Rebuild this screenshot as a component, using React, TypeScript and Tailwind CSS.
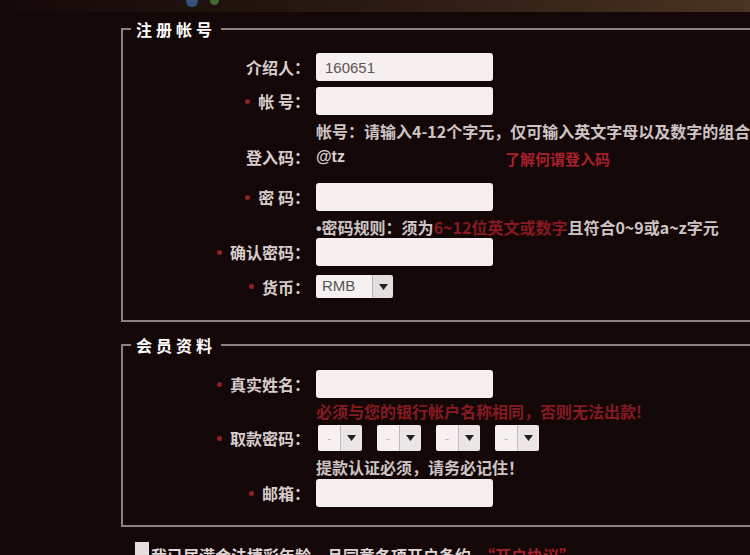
import type { ReactNode } from 'react';

const FONT = "font-['Noto_Sans_CJK_SC','Noto_Sans',sans-serif]";
const LATIN = "font-['Liberation_Sans','Noto_Sans_CJK_SC',sans-serif]";

function Req() {
  return <span className="mr-[8px] inline-block h-[5px] w-[5px] rounded-full bg-[#8e2228]" />;
}

interface RowProps {
  label?: string;
  req?: boolean;
  className: string;
  children: ReactNode;
}

function Row({ label, req, className, children }: RowProps) {
  return (
    <div className={`flex items-center ${className}`}>
      <div className="flex w-[187px] shrink-0 items-center justify-end text-[16px] font-bold text-[#d6cecc]">
        {label && req && <Req />}
        {label}
      </div>
      <div className="ml-[6px] flex items-center">{children}</div>
    </div>
  );
}

function TextInput({ value = '' }: { value?: string }) {
  return (
    <input
      readOnly
      value={value}
      className={`h-[28px] w-[177px] shrink-0 rounded-[3px] bg-[#f5efef] px-[9px] text-[15px] text-[#5a5555] outline-none ${LATIN}`}
    />
  );
}

function Arrow() {
  return (
    <svg width="9" height="6" viewBox="0 0 9 6">
      <path d="M0 0h9L4.5 6z" fill="#222" />
    </svg>
  );
}

function Currency() {
  return (
    <div className="flex h-[23px] overflow-hidden rounded-[2px]">
      <div className={`flex w-[56px] items-center bg-[#f6f0f0] pl-[6px] text-[15px] text-[#555] ${LATIN}`}>RMB</div>
      <div className="flex w-[21px] items-center justify-center border-l border-[#b9b1b1] bg-[#e4dddd]">
        <Arrow />
      </div>
    </div>
  );
}

function DigitSelect() {
  return (
    <div className="flex h-[26px] w-[44px] overflow-hidden rounded-[2px]">
      <div className="flex w-[22px] items-center justify-center bg-[#f6f0f0] text-[12px] text-[#b8b0b0]">-</div>
      <div className="flex w-[22px] items-center justify-center border-l border-[#c4bcbc] bg-[#ebe5e5]">
        <Arrow />
      </div>
    </div>
  );
}

function Legend({ children }: { children: ReactNode }) {
  return (
    <legend className="ml-[8px] px-[5px] text-[16px] font-bold leading-[20px] tracking-[4px] text-white">
      {children}
    </legend>
  );
}

const HINT = 'whitespace-nowrap text-[16px] font-bold text-[#cdc5c3]';

export default function App() {
  return (
    <div className={`h-[555px] w-[750px] overflow-hidden bg-[#140708] ${FONT}`}>
      {/* top strip */}
      <div className="flex h-[12px] items-start gap-[12px] bg-linear-to-r from-[#150808] via-[#2a1a12] to-[#4a3323] pl-[186px]">
        <span className="-mt-[5px] h-[12px] w-[12px] rounded-full bg-[#3f7fc4] opacity-60" />
        <span className="-mt-[4px] h-[9px] w-[9px] rounded-full bg-[#5aa64a] opacity-60" />
      </div>

      <fieldset className="ml-[121px] mt-[7px] w-[660px] border-2 border-[#8d7f7c] pb-[17px] pt-[11px]">
        <Legend>注册帐号</Legend>

        <Row label="介绍人：" className="h-[34px]">
          <TextInput value="160651" />
        </Row>
        <Row label="帐 号：" req className="h-[34px]">
          <TextInput />
        </Row>
        <Row className="h-[26px]">
          <span className={HINT}>帐号：请输入4-12个字元，仅可输入英文字母以及数字的组合</span>
        </Row>
        <Row label="登入码：" className="h-[26px]">
          <span className={`w-[189px] text-[16px] font-bold text-[#d9d1cf] ${LATIN}`}>@tz</span>
          <span className="mt-[5px] text-[15px] font-bold text-[#a8202a]">了解何谓登入码</span>
        </Row>
        <Row label="密 码：" req className="mt-[8px] h-[38px]">
          <TextInput />
        </Row>
        <Row className="h-[24px]">
          <span className={HINT}>
            <span className={LATIN}>•</span>密码规则：须为<span className="text-[#861a20]">6~12位英文或数字</span>且符合0~9或a~z字元
          </span>
        </Row>
        <Row label="确认密码：" req className="h-[24px]">
          <TextInput />
        </Row>
        <Row label="货币：" req className="mt-[6px] h-[33px]">
          <Currency />
        </Row>
      </fieldset>

      <fieldset className="ml-[121px] mt-[13px] w-[660px] border-2 border-[#8d7f7c] pb-[18px] pt-[12px]">
        <Legend>会员资料</Legend>

        <Row label="真实姓名：" req className="h-[34px]">
          <TextInput />
        </Row>
        <Row className="h-[20px]">
          <span className="whitespace-nowrap text-[16px] font-bold text-[#861a20]">
            必须与您的银行帐户名称相同，否则无法出款!
          </span>
        </Row>
        <Row label="取款密码：" req className="h-[34px]">
          <div className="ml-[2px] flex gap-[15px]">
            <DigitSelect />
            <DigitSelect />
            <DigitSelect />
            <DigitSelect />
          </div>
        </Row>
        <Row className="h-[24px]">
          <span className={HINT}>提款认证必须，请务必记住！</span>
        </Row>
        <Row label="邮箱：" req className="h-[28px]">
          <TextInput />
        </Row>
      </fieldset>

      <div className="ml-[135px] mt-[14px] flex items-start gap-[2px]">
        <span className="mt-[1px] h-[14px] w-[14px] shrink-0 bg-[#e6dede]" />
        <span className="mt-[4px] whitespace-nowrap text-[16px] font-bold leading-[20px] text-[#ddd5d3]">
          我已届满合法博彩年龄，且同意各项开户条约。<span className="text-[#a8202a]">“开户协议”</span>
        </span>
      </div>
    </div>
  );
}
